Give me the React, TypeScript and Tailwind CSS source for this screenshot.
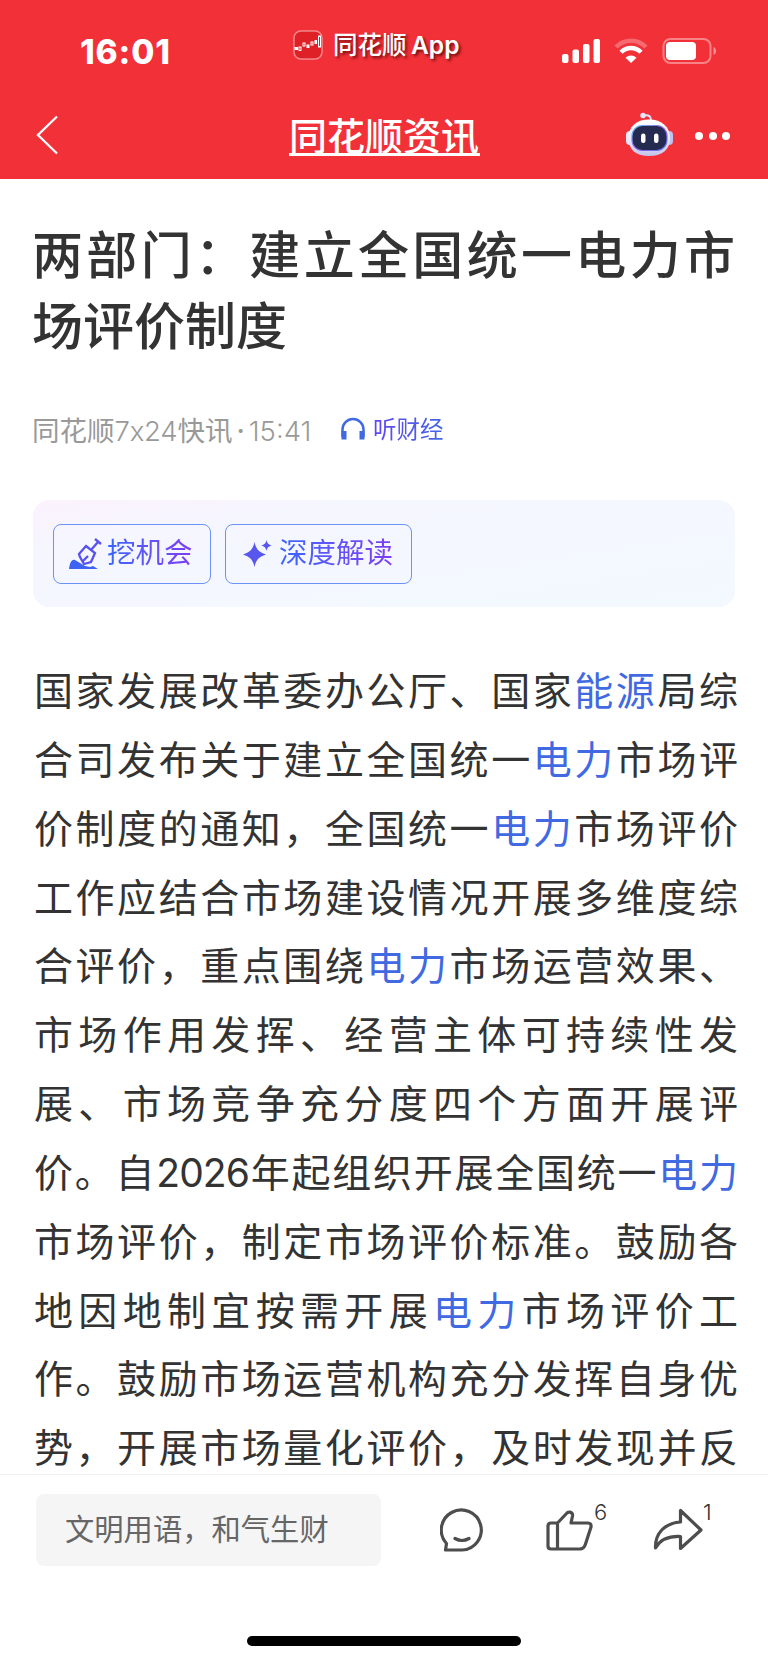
import type { ReactNode } from "react";

const Key = ({ children }: { children: ReactNode }) => <span className="text-[#4169e1]">{children}</span>;

const lines: ReactNode[] = [
  <>国家发展改革委办公厅、国家<Key>能源</Key>局综</>,
  <>合司发布关于建立全国统一<Key>电力</Key>市场评</>,
  <>价制度的通知，全国统一<Key>电力</Key>市场评价</>,
  <>工作应结合市场建设情况开展多维度综</>,
  <>合评价，重点围绕<Key>电力</Key>市场运营效果、</>,
  <>市场作用发挥、经营主体可持续性发</>,
  <>展、市场竞争充分度四个方面开展评</>,
  <>价。自<span className="font-['Inter'] leading-none tracking-[-0.9px]">2026</span>年起组织开展全国统一<Key>电力</Key></>,
  <>市场评价，制定市场评价标准。鼓励各</>,
  <>地因地制宜按需开展<Key>电力</Key>市场评价工</>,
  <>作。鼓励市场运营机构充分发挥自身优</>,
  <>势，开展市场量化评价，及时发现并反</>,
];

function StatusIcons() {
  return (
    <svg width="160" height="30" viewBox="0 0 160 30" fill="#fff">
      <rect x="2" y="18" width="6.500" height="9" rx="2" />
      <rect x="12.500" y="13.500" width="6.500" height="13.500" rx="2" />
      <rect x="23" y="8" width="6.500" height="19" rx="2" />
      <rect x="33.500" y="3" width="6.500" height="24" rx="2" />
      <path d="M56 11a21 21 0 0 1 30 0" fill="none" stroke="#fff" strokeOpacity=".28" strokeWidth="4.500" />
      <path d="M61 16.200a14 14 0 0 1 20 0" fill="none" stroke="#fff" strokeWidth="4.500" />
      <path d="M71 27l-5.500-5.300a8 8 0 0 1 11 0z" />
      <rect x="103.500" y="3" width="47" height="24" rx="7" fill="none" stroke="#fff" strokeOpacity=".4" strokeWidth="2" />
      <rect x="106" y="6" width="30" height="18" rx="4" />
      <path d="M153.500 11c3.500 1.500 3.500 6.500 0 8z" fillOpacity=".45" />
    </svg>
  );
}

function Robot() {
  return (
    <svg width="50" height="46" viewBox="0 0 50 46">
      <defs>
        <linearGradient id="shell" x1="0" y1="0" x2="0" y2="1">
          <stop offset="0" stopColor="#fff" />
          <stop offset=".6" stopColor="#e8e7fa" />
          <stop offset="1" stopColor="#c3c2ea" />
        </linearGradient>
        <linearGradient id="rim" x1="0" y1="0" x2="1" y2="1">
          <stop offset="0" stopColor="#62c5f2" />
          <stop offset=".5" stopColor="#8f5ce8" />
          <stop offset="1" stopColor="#5a7af0" />
        </linearGradient>
      </defs>
      <path d="M20 4.500c5-1 7 1 7 5" fill="none" stroke="#e4e2f8" strokeWidth="2" />
      <circle cx="19" cy="4.500" r="2.700" fill="#e9e8fb" />
      <rect x="2" y="20" width="8" height="14" rx="4" fill="#e8e8fa" />
      <rect x="41" y="20" width="8" height="14" rx="4" fill="#bfc1f0" />
      <path d="M25 8.500C38 8.500 46 16 46 27s-7 18-21 18S4.500 38 4.500 27 12 8.500 25 8.500" fill="url(#shell)" />
      <rect x="8" y="14.500" width="35" height="25" rx="10.500" fill="#252b50" stroke="url(#rim)" strokeWidth="1.200" />
      <rect x="17" y="22.500" width="4.500" height="9.500" rx="2.200" fill="#fff" />
      <rect x="30" y="22.500" width="4.500" height="9.500" rx="2.200" fill="#fff" />
    </svg>
  );
}

function Header() {
  return (
    <header className="h-[179px] shrink-0 bg-[#f23038] text-white">
      <div className="flex h-[84px] items-start">
        <div className="w-[293px] pt-[34px] pl-[80px] font-['Inter'] text-[33.500px] leading-9 font-extrabold tracking-[0.8px]">16:01</div>
        <div className="flex h-[89px] w-[267px] items-center gap-[10px]">
          <svg width="30" height="30" viewBox="0 0 30 30" fill="none" stroke="#fff">
            <rect x="1" y="1" width="28" height="28" rx="7" fill="#df2026" strokeOpacity=".45" strokeWidth="1.500" />
            <rect x="2" y="17.500" width="2.500" height="2" fill="#fff" />
            <rect x="6" y="17" width="2" height="3.500" />
            <rect x="10" y="13" width="2" height="3" />
            <rect x="14" y="15" width="2" height="2.500" fill="#fff" />
            <rect x="18" y="12" width="2" height="3" />
            <rect x="22" y="10.500" width="1.500" height="3" fill="#fff" />
            <rect x="25.500" y="6" width="2" height="11" />
          </svg>
          <span className="pt-px text-[24.500px] font-medium whitespace-nowrap [text-shadow:2px_2px_3px_rgba(70,0,0,.75)]">
            同花顺 <span className="-ml-[1px] font-['Inter'] font-semibold">App</span>
          </span>
        </div>
        <div className="pt-[36px]"><StatusIcons /></div>
      </div>
      <div className="flex h-[95px] items-center pt-[7px]">
        <svg className="ml-[35px]" width="24" height="40" viewBox="0 0 24 40" fill="none" stroke="#fff" strokeWidth="2.300">
          <path d="M22 1.500 3 20l19 18.500" />
        </svg>
        <h2 className="mt-[2px] ml-[230px] w-[191px] border-b-[3px] border-white text-[38px] leading-[36px] font-medium whitespace-nowrap">
          <span className="-mt-px mb-px block">同花顺资讯</span>
        </h2>
        <div className="ml-[144px] pb-[2px]"><Robot /></div>
        <div className="ml-[21px] flex gap-[5.700px] pt-[2px]">
          <i className="size-2 rounded-full bg-white" />
          <i className="size-2 rounded-full bg-white" />
          <i className="size-2 rounded-full bg-white" />
        </div>
      </div>
    </header>
  );
}

function Toolbar() {
  return (
    <section className="mx-[33px] mt-[50px] flex h-[107px] items-center gap-[14px] rounded-2xl bg-linear-to-br from-[#fbf2fd] via-[#f5f6ff] via-25% to-[#f3f9ff] pl-5 text-[28.500px]">
      <button className="flex h-[60px] w-[158px] items-center rounded-lg border border-[#6b93f5] pl-[14px]">
        <svg width="34" height="34" viewBox="0 0 34 34" fill="none" stroke="#5851ed" strokeWidth="2.300">
          <path d="m27 2 6 5M30 5l-7 8M18 9l9 7-4 9-7 2-4-7-1-3zM15 24l5-5" />
          <path d="M1 32c1-7 3-10 6-9l10 6 5 1 3-1 5 3z" fill="#3c63f3" stroke="none" />
        </svg>
        <span className="mb-[5px] ml-[5px] bg-linear-to-r from-[#3565fb] to-[#7d3bf3] bg-clip-text text-transparent">挖机会</span>
      </button>
      <button className="flex h-[60px] w-[187px] items-center rounded-lg border border-[#6b93f5] pl-[17px]">
        <svg className="-mt-[2px]" width="30" height="30" viewBox="0 0 30 30" fill="#5757ed">
          <path d="M11.500 4c1.500 7 4 10 11.500 12.500-7.500 2.500-10 5.500-11.500 12.500C10 22 7.500 19 0 16.500 7.500 14 10 11 11.500 4M23.500 2c.8 3.500 2 4.700 5.500 5.500-3.500.8-4.700 2-5.500 5.500-.8-3.500-2-4.700-5.500-5.500 3.500-.8 4.700-2 5.500-5.500" />
        </svg>
        <span className="mb-[5px] ml-[6px] bg-linear-to-r from-[#3565fb] to-[#7d3bf3] bg-clip-text text-transparent">深度解读</span>
      </button>
    </section>
  );
}

function Footer() {
  return (
    <footer className="h-[189px] shrink-0 border-t border-[#efefef] bg-white">
      <div className="flex items-start pt-[19px] pl-9">
        <div className="flex h-[72px] w-[345px] items-center rounded-lg bg-[#f5f5f5] pb-[4px] pl-[29px] text-[29.300px] text-[#666]">文明用语，和气生财</div>
        <svg className="mt-[14px] ml-[59px]" width="44" height="44" viewBox="0 0 44 44" fill="none" stroke="#4d4d4d" strokeWidth="3.200" strokeLinejoin="round" strokeLinecap="round">
          <path d="M5.500 42H22A20 20 0 1 0 6.500 35.500zM15 30.500q7 4 14 0" />
        </svg>
        <svg className="mt-[14px] ml-[61px]" width="48" height="44" viewBox="0 0 48 44" fill="none" stroke="#4d4d4d" strokeWidth="3.200" strokeLinejoin="round">
          <path d="M12.500 15H6q-3 0-3 3v20q0 3 3 3h29q4 0 5.500-5L46 19q.5-4-3-4H26l1.500-7q.5-3-2.500-4-2 0-3 1zM12.500 15v26" />
        </svg>
        <span className="mt-[2px] ml-[1px] w-[21px] font-['Inter'] text-[22px] font-light text-[#333]">6</span>
        <svg className="mt-[14px] ml-[38px]" width="50" height="44" viewBox="0 0 50 44" fill="none" stroke="#4d4d4d" strokeWidth="3.200" strokeLinejoin="round">
          <path d="M27.500 2.500V14C12 15 2 25 2.500 40c5-9 13-12 25-11.500v12L48 22z" />
        </svg>
        <span className="mt-[2px] font-['Inter'] text-[22px] font-light text-[#333]">1</span>
      </div>
      <div className="mx-auto mt-[70px] h-[10px] w-[274px] rounded-full bg-black" />
    </footer>
  );
}

export default function App() {
  return (
    <div className="flex h-[1663px] w-[768px] flex-col overflow-hidden bg-white font-['Noto_Sans_CJK_SC',sans-serif]" lang="zh-CN">
      <Header />
      <main className="min-h-0 flex-1">
        <h1 className="mr-[33px] ml-[32px] pt-[38px] text-[51px] leading-[71px] font-medium whitespace-nowrap text-[#333]">
          <div className="[text-align-last:justify]">两部门：建立全国统一电力市</div>
          <div>场评价制度</div>
        </h1>
        <div className="mt-[53px] flex h-[38px] items-center pl-[32px] text-[27.500px] text-[#999]">
          <span className="w-[279px] whitespace-nowrap">
            同花顺<span className="font-['Inter'] font-light tracking-[-0.2px]">7x24</span>快讯
            <span className="font-['Inter'] font-light"><span className="mx-[4px] font-medium">·</span>15:41</span>
          </span>
          <span className="ml-[29px] flex items-center gap-[7px] pb-[5px] text-[23.500px]">
            <svg width="26" height="24" viewBox="0 0 26 24" fill="none" stroke="#4169e1" strokeWidth="2.500">
              <path d="M2.500 20v-7.500a10.500 10.500 0 0 1 21 0V20" />
              <path d="M4 14v8.500M22 14v8.500" strokeWidth="5" />
            </svg>
            <span className="bg-linear-to-r from-[#6046f2] to-[#4165e4] bg-clip-text text-transparent">听财经</span>
          </span>
        </div>
        <Toolbar />
        <article className="mt-[47px] h-[821px] pr-[30px] pl-[34px] text-[39px] leading-[68.850px] text-[#333]">
          {lines.map((line, i) => (
            <p key={i} className="h-[68.850px] whitespace-nowrap [text-align-last:justify]">{line}</p>
          ))}
        </article>
      </main>
      <Footer />
    </div>
  );
}
